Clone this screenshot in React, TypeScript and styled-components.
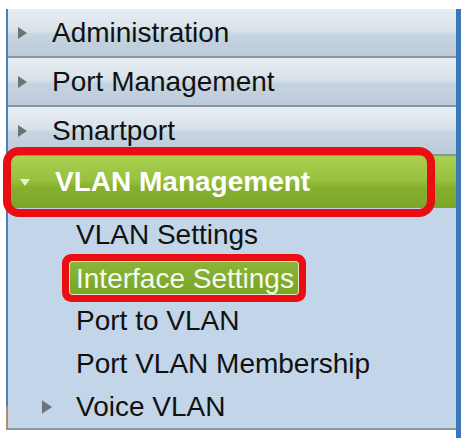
import React from "react";
import styled, { createGlobalStyle } from "styled-components";

const Global = createGlobalStyle`
  html, body { margin: 0; padding: 0; background: #ffffff; }
  body { font-family: "Liberation Sans", Arial, sans-serif; }
`;

const Panel = styled.nav`
  margin: 9px 0 0 6px;
  width: 455px;
  box-sizing: border-box;
  border-right: 5px solid #3b76b6;
  padding-bottom: 8px;
  background: #ffffff;
`;

const Column = styled.div`
  display: flex;
  flex-direction: column;
  border-left: 2px solid #4a7fb7;
  border-image: linear-gradient(to bottom, #4a7fb7 0%, #4a7fb7 94%, #b08e6b 94%, #b08e6b 100%) 1;
`;

const TopRow = styled.div`
  display: flex;
  align-items: center;
  gap: 25px;
  height: 47px;
  padding-left: 10px;
  border-bottom: 2px solid #8495a3;
  background: linear-gradient(
    to bottom,
    #e8eef3 0%,
    #d9e2ea 45%,
    #c6d4e0 55%,
    #bccbd8 100%
  );
  font-size: 28px;
  color: #111111;
  white-space: nowrap;
`;

const ActiveRow = styled.div`
  position: relative;
  display: flex;
  align-items: center;
  gap: 25px;
  height: 52px;
  padding-left: 12px;
  background: linear-gradient(to bottom, #a9d04f 0%, #99c23f 45%, #86b02e 60%, #7ca627 100%);
  font-size: 28px;
  font-weight: bold;
  color: #ffffff;
  white-space: nowrap;
`;

const Callout = styled.div`
  position: absolute;
  left: -5px;
  top: -9px;
  width: 432px;
  height: 70px;
  box-sizing: border-box;
  border: 8px solid #ea0d12;
  border-radius: 16px;
  pointer-events: none;
`;

const SubMenu = styled.div`
  display: flex;
  flex-direction: column;
  padding-top: 5px;
  background: #c3d5e8;
  border-bottom: 2px solid #8d979f;
`;

const SubItem = styled.div`
  display: flex;
  align-items: center;
  gap: 24px;
  height: 43px;
  padding-left: 34px;
  font-size: 28px;
  color: #111111;
  white-space: nowrap;
`;

const Slot = styled.span`
  display: flex;
  align-items: center;
  justify-content: center;
  width: 10px;
  height: 14px;
`;

const Label = styled.span<{ $highlight?: boolean }>`
  display: inline-block;
  ${(p) =>
    p.$highlight
      ? `
    margin-left: -6px;
    padding: 0 4px 0 6px;
    height: 32px;
    line-height: 33px;
    color: #f7faee;
    background: linear-gradient(to bottom, #8ab537, #7aa526);
    border-radius: 3px;
    box-shadow: 0 0 0 1px #dfe8c9, 0 0 0 8px #ea0d12;
  `
      : ""}
`;

const RightArrow = ({ size = 9 }: { size?: number }) => (
  <svg width={size} height={Math.round(size * 1.35)} viewBox="0 0 9 12">
    <polygon points="0,0 9,6 0,12" fill="#6c7378" />
  </svg>
);

const DownArrow = () => (
  <svg width="10" height="7" viewBox="0 0 10 7">
    <polygon points="0,0 10,0 5,7" fill="#e9f2d6" />
  </svg>
);

const topItems = ["Administration", "Port Management", "Smartport"];

const subItems: { label: string; highlight?: boolean; arrow?: boolean }[] = [
  { label: "VLAN Settings" },
  { label: "Interface Settings", highlight: true },
  { label: "Port to VLAN" },
  { label: "Port VLAN Membership" },
  { label: "Voice VLAN", arrow: true },
];

export default function App() {
  return (
    <>
      <Global />
      <Panel>
        <Column>
          {topItems.map((t) => (
            <TopRow key={t}>
              <RightArrow />
              <span>{t}</span>
            </TopRow>
          ))}
          <ActiveRow>
            <DownArrow />
            <span>VLAN Management</span>
            <Callout />
          </ActiveRow>
          <SubMenu>
            {subItems.map((s) => (
              <SubItem key={s.label}>
                <Slot>{s.arrow ? <RightArrow size={10} /> : null}</Slot>
                <Label $highlight={s.highlight}>{s.label}</Label>
              </SubItem>
            ))}
          </SubMenu>
        </Column>
      </Panel>
    </>
  );
}
